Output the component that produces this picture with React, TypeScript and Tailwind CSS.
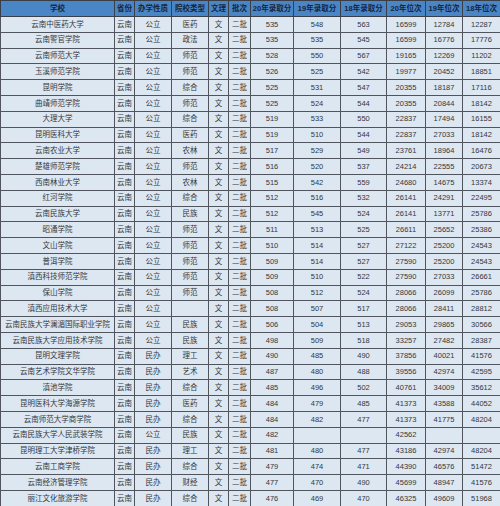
import React from 'react';

const headers = ['学校', '省份', '办学性质', '院校类型', '文理', '批次', '20年录取分', '19年录取分', '18年录取分', '20年位次', '19年位次', '18年位次'];
const widths = ['w-[114px]', 'w-[20px]', 'w-[37px]', 'w-[37px]', 'w-[20px]', 'w-[22px]', 'w-[43px]', 'w-[47px]', 'w-[46px]', 'w-[39px]', 'w-[37px]', 'w-[38px]'];

// name, 性质, 类型, 20分, 19分, 18分, 20位, 19位, 18位
const rows: string[][] = [
  ['云南中医药大学', '公立', '医药', '535', '548', '563', '16599', '12784', '12287'],
  ['云南警官学院', '公立', '政法', '535', '535', '545', '16599', '16776', '17776'],
  ['云南师范大学', '公立', '师范', '528', '550', '567', '19165', '12269', '11202'],
  ['玉溪师范学院', '公立', '师范', '526', '525', '542', '19977', '20452', '18851'],
  ['昆明学院', '公立', '综合', '525', '531', '547', '20355', '18187', '17116'],
  ['曲靖师范学院', '公立', '师范', '525', '524', '544', '20355', '20844', '18142'],
  ['大理大学', '公立', '综合', '519', '533', '550', '22837', '17494', '16155'],
  ['昆明医科大学', '公立', '医药', '519', '510', '544', '22837', '27033', '18142'],
  ['云南农业大学', '公立', '农林', '517', '529', '549', '23761', '18964', '16476'],
  ['楚雄师范学院', '公立', '师范', '516', '520', '537', '24214', '22555', '20673'],
  ['西南林业大学', '公立', '农林', '515', '542', '559', '24680', '14675', '13374'],
  ['红河学院', '公立', '综合', '512', '516', '532', '26141', '24291', '22495'],
  ['云南民族大学', '公立', '民族', '512', '545', '524', '26141', '13771', '25786'],
  ['昭通学院', '公立', '师范', '511', '513', '525', '26611', '25652', '25386'],
  ['文山学院', '公立', '师范', '510', '514', '527', '27122', '25200', '24543'],
  ['普洱学院', '公立', '师范', '509', '514', '527', '27590', '25200', '24543'],
  ['滇西科技师范学院', '公立', '师范', '509', '510', '522', '27590', '27033', '26661'],
  ['保山学院', '公立', '师范', '508', '512', '524', '28066', '26099', '25786'],
  ['滇西应用技术大学', '公立', '', '508', '507', '517', '28066', '28411', '28812'],
  ['云南民族大学澜湄国际职业学院', '公立', '民族', '506', '504', '513', '29053', '29865', '30566'],
  ['云南民族大学应用技术学院', '公立', '民族', '498', '509', '518', '33257', '27482', '28387'],
  ['昆明文理学院', '民办', '理工', '490', '485', '490', '37856', '40021', '41576'],
  ['云南艺术学院文华学院', '民办', '艺术', '487', '480', '488', '39556', '42974', '42595'],
  ['滇池学院', '民办', '综合', '485', '496', '502', '40761', '34009', '35612'],
  ['昆明医科大学海源学院', '民办', '医药', '484', '479', '485', '41373', '43588', '44052'],
  ['云南师范大学商学院', '民办', '综合', '484', '482', '477', '41373', '41775', '48204'],
  ['云南民族大学人民武装学院', '公立', '民族', '482', '', '', '42562', '', ''],
  ['昆明理工大学津桥学院', '民办', '理工', '481', '480', '477', '43186', '42974', '48204'],
  ['云南工商学院', '民办', '综合', '479', '474', '471', '44390', '46576', '51472'],
  ['云南经济管理学院', '民办', '财经', '477', '470', '490', '45699', '48947', '41576'],
  ['丽江文化旅游学院', '民办', '综合', '476', '469', '470', '46325', '49609', '51968'],
];

export default function App() {
  return (
    <div className="w-[500px] h-[506px] overflow-hidden bg-[#dde7f1] font-['Liberation_Sans','Noto_Sans_CJK_SC',sans-serif]">
      <table className="w-[500px] table-fixed border-collapse border border-[#3a3f47] text-[7.5px] text-[#33373d]">
        <colgroup>
          {widths.map((w, i) => (
            <col key={i} className={w} />
          ))}
        </colgroup>
        <thead>
          <tr className="h-[16px] bg-[#4a85c6]">
            {headers.map((h) => (
              <th
                key={h}
                className="border border-[#3a3f47] p-0 text-center text-[7.5px] font-bold leading-none whitespace-nowrap text-[#16263d]"
              >
                {h}
              </th>
            ))}
          </tr>
        </thead>
        <tbody>
          {rows.map((r) => {
            const cells = [r[0], '云南', r[1], r[2], '文', '二批', ...r.slice(3)];
            return (
              <tr key={r[0]} className="h-[15.8px] bg-[#dde7f1]">
                {cells.map((c, i) => (
                  <td
                    key={i}
                    className="border border-[#50555d] p-0 text-center leading-none whitespace-nowrap overflow-hidden"
                  >
                    {c}
                  </td>
                ))}
              </tr>
            );
          })}
        </tbody>
      </table>
    </div>
  );
}
